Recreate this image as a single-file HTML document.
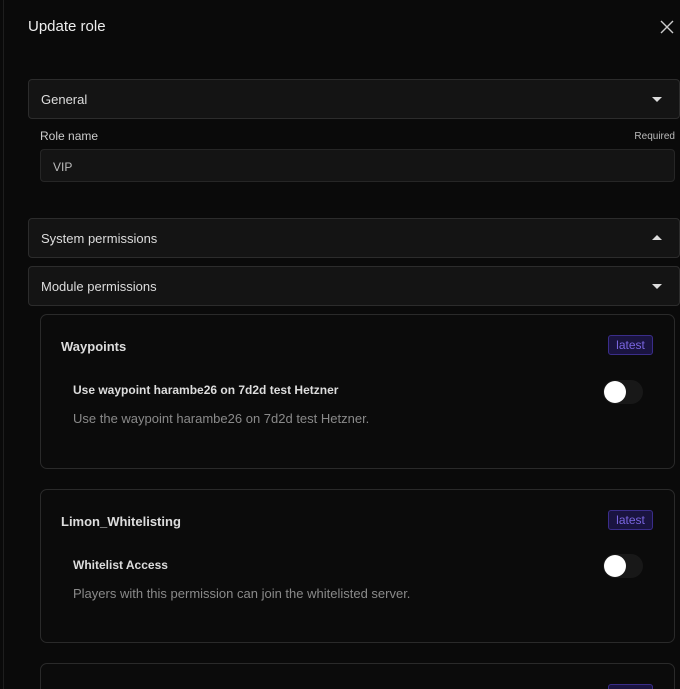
<!DOCTYPE html>
<html><head><style>
*{box-sizing:border-box;margin:0;padding:0}
html,body{width:680px;height:689px;overflow:hidden}
body{background:#0a0a0a;font-family:"Liberation Sans",sans-serif;color:#e6e6e6;position:relative}
.a{position:absolute}
.acc{position:absolute;left:28px;width:652px;height:40px;background:#141414;border:1px solid #2c2c2c;border-radius:4px;font-size:13px;padding:12px 12px;color:#ddd}
.tri{position:absolute;right:17px;top:17px;width:0;height:0;border-left:5px solid transparent;border-right:5px solid transparent}
.card{position:absolute;left:40px;width:635px;border:1px solid #2a2a2a;border-radius:7px;background:#0b0b0b}
.badge{position:absolute;right:21px;top:20px;width:45px;height:20px;text-align:center;border:1px solid #3a2d8a;background:#1a1440;color:#7a66e0;font-size:12px;line-height:18px;border-radius:3px}
.tg{position:absolute;left:562px;width:40px;height:24px;border-radius:12px;background:#181818}
.tg::after{content:"";position:absolute;left:1px;top:1px;width:22px;height:22px;border-radius:50%;background:#fff}
</style></head><body>
<div class="a" style="left:3px;top:0;width:1px;height:689px;background:#1e1e1e"></div>
<div class="a" style="left:28px;top:18px;font-size:15px;color:#eee">Update role</div>
<svg class="a" style="left:660px;top:20px" width="14" height="14" viewBox="0 0 14 14"><path d="M1 1L13 13M13 1L1 13" stroke="#ccc" stroke-width="1.4"/></svg>
<div class="acc" style="top:79px">General<div class="tri" style="border-top:5px solid #ddd"></div></div>
<div class="a" style="left:40px;top:129px;font-size:12px;color:#ccc">Role name</div>
<div class="a" style="right:5px;top:131px;font-size:10px;color:#bbb">Required</div>
<div class="a" style="left:40px;top:149px;width:635px;height:33px;background:#141414;border:1px solid #262626;border-radius:4px;font-size:12px;color:#bbb;padding:10px 12px">VIP</div>
<div class="acc" style="top:218px">System permissions<div class="tri" style="border-bottom:5px solid #ddd;top:16px"></div></div>
<div class="acc" style="top:266px">Module permissions<div class="tri" style="border-top:5px solid #ddd"></div></div>
<div class="card" style="top:314px;height:155px">
<div class="a" style="left:20px;top:24px;font-size:13px;font-weight:bold;color:#ddd">Waypoints</div>
<div class="badge">latest</div>
<div class="a" style="left:32px;top:68px;font-size:12px;font-weight:bold;color:#ddd">Use waypoint harambe26 on 7d2d test Hetzner</div>
<div class="a" style="left:32px;top:96px;font-size:13px;color:#8a8a8a">Use the waypoint harambe26 on 7d2d test Hetzner.</div>
<div class="tg" style="top:65px"></div>
</div>
<div class="card" style="top:489px;height:154px">
<div class="a" style="left:20px;top:24px;font-size:13px;font-weight:bold;color:#ddd">Limon_Whitelisting</div>
<div class="badge">latest</div>
<div class="a" style="left:32px;top:68px;font-size:12px;font-weight:bold;color:#ddd">Whitelist Access</div>
<div class="a" style="left:32px;top:96px;font-size:13px;color:#8a8a8a">Players with this permission can join the whitelisted server.</div>
<div class="tg" style="top:64px"></div>
</div>
<div class="card" style="top:663px;height:60px">
<div class="badge" style="top:20px"></div>
</div>
</body></html>
